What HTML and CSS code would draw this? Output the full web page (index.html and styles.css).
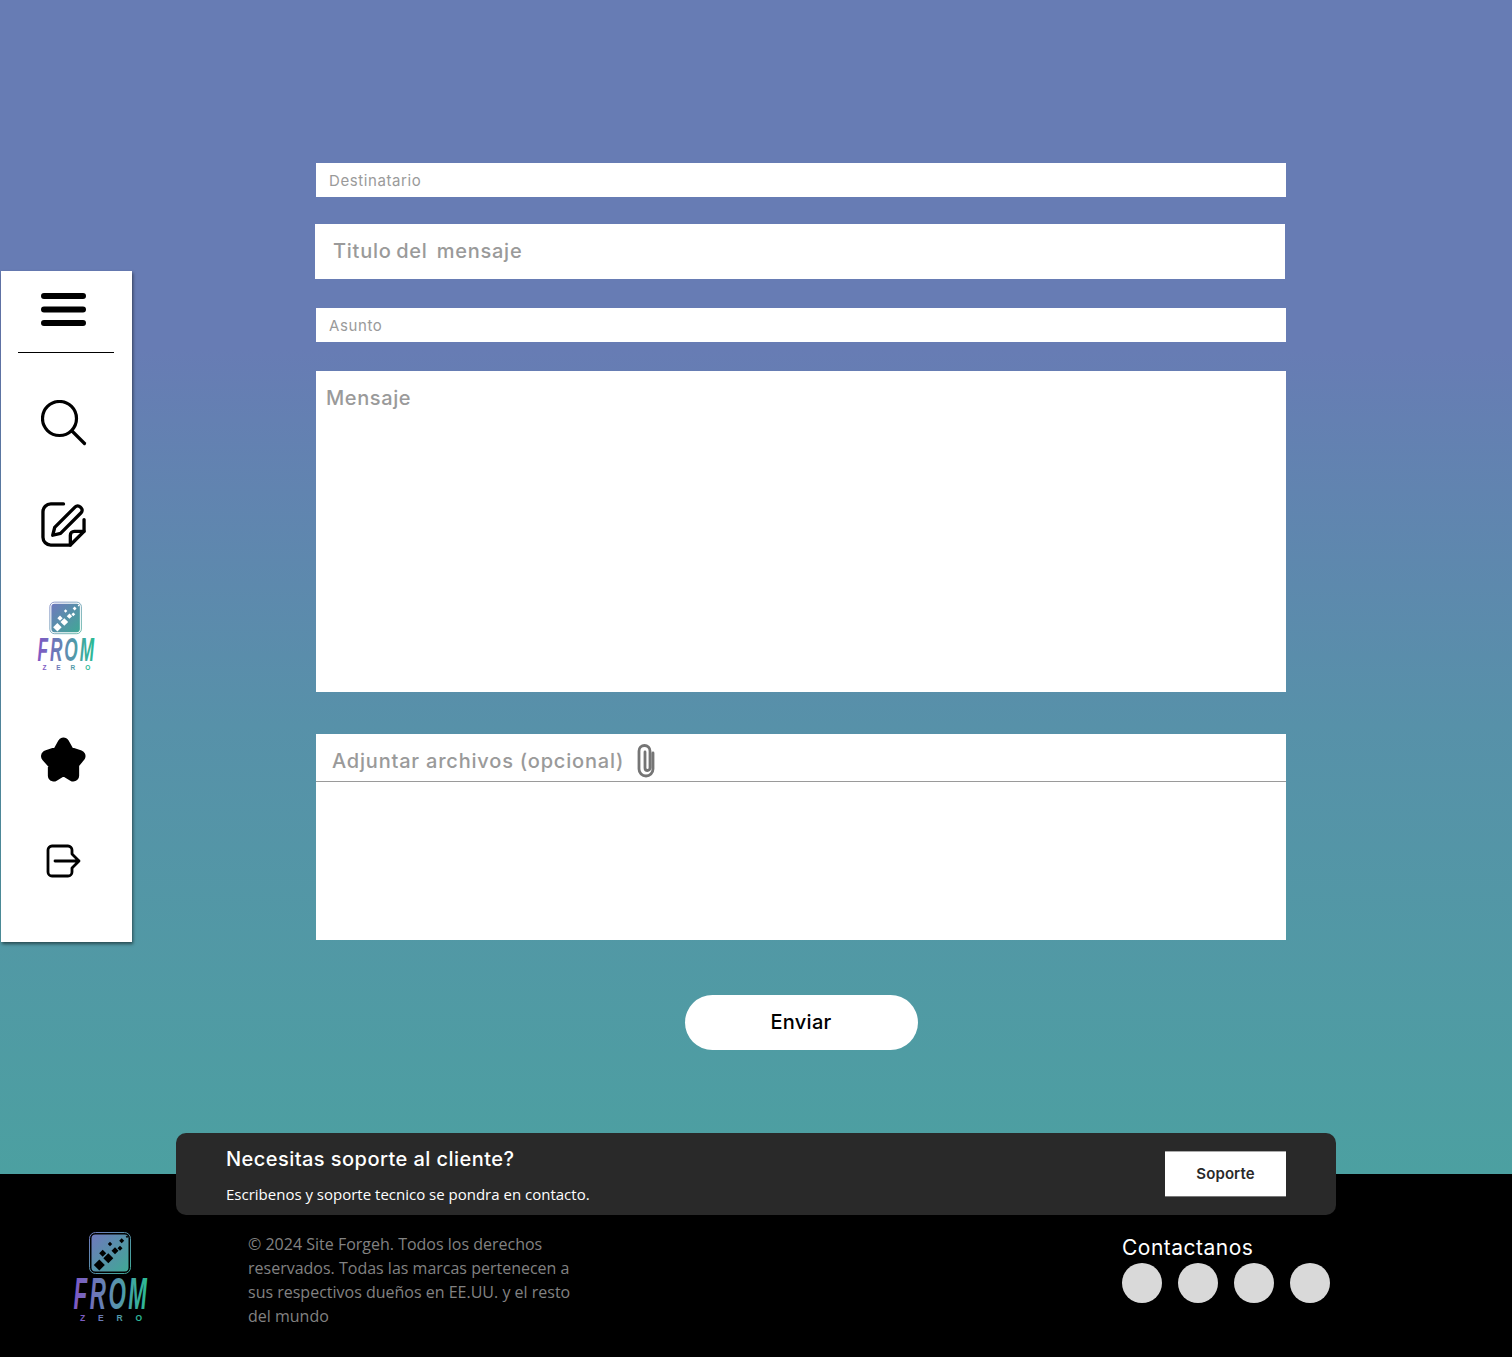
FILE: index.html
```html
<!DOCTYPE html>
<html lang="es">

<head>
  <title>From Zero - Nuevo mensaje</title>
  <link rel="stylesheet" href="styles.css">
</head>

<body>
  <svg class="defs" width="0" height="0">
    <defs>
      <linearGradient id="logo-square" x1="0" y1="0" x2="1" y2="1">
        <stop offset="0" stop-color="#6f79bd" />
        <stop offset="1" stop-color="#3fa895" />
      </linearGradient>
      <linearGradient id="logo-word" x1="0" y1="0" x2="1" y2="0">
        <stop offset="0" stop-color="#7f57c4" />
        <stop offset="0.5" stop-color="#5f8db0" />
        <stop offset="1" stop-color="#27bd92" />
      </linearGradient>
      <symbol id="logo" viewBox="0 0 75 91">
        <rect x="16.5" y="1.5" width="41" height="41" rx="6" fill="none" stroke="url(#logo-square)" />
        <rect x="18.5" y="3.5" width="37" height="37" rx="4" fill="url(#logo-square)" />
        <g fill="currentColor">
          <path d="M26.3 28.500 31.800 34 26.3 39.500 20.800 34Z" />
          <path d="M35.3 22.300 40.300 27.300 35.300 32.300 30.300 27.300Z" />
          <path d="M29.700 18.800 33.200 22.300 29.700 25.800 26.200 22.300Z" />
          <path d="M42 16.200 45.500 19.700 42 23.200 38.500 19.700Z" />
          <path d="M37 10.800 39.200 13 37 15.200 34.800 13Z" />
          <path d="M47 14.800 49.500 17.300 47 19.800 44.500 17.300Z" />
          <path d="M48.700 7.200 51.200 9.700 48.700 12.200 46.200 9.700Z" />
          <path d="M54 4.500 55.300 5.800 54 7.100 52.700 5.800Z" />
        </g>
        <text class="logo-word" x="0.5" y="78" textLength="76" lengthAdjust="spacingAndGlyphs" fill="url(#logo-word)">FROM</text>
        <text class="logo-zero" x="7" y="89.500" textLength="62" fill="url(#logo-word)">ZERO</text>
      </symbol>
    </defs>
  </svg>

  <div class="hero">
    <nav class="sidebar">
      <a class="menu-btn">
        <svg viewBox="0 0 46 34" width="46" height="34">
          <path d="M3 3H42M3 16.500H42M3 30H42" fill="none" stroke="#000" stroke-width="6" stroke-linecap="round" />
        </svg>
      </a>
      <hr class="sidebar-line">
      <a class="nav-icon search-icon">
        <svg viewBox="0 0 46 46" width="46" height="46">
          <circle cx="18.500" cy="18.500" r="17" fill="none" stroke="#000" stroke-width="3.200" />
          <path d="M31 31 43.500 43.500" fill="none" stroke="#000" stroke-width="3.200" stroke-linecap="round" />
        </svg>
      </a>
      <a class="nav-icon edit-icon">
        <svg viewBox="0 0 46 46" width="45" height="45">
          <g fill="none" stroke="#000" stroke-width="3.400" stroke-linejoin="round" stroke-linecap="round">
            <path d="M23 2H10a8 8 0 0 0-8 8V36a8 8 0 0 0 8 8H30L44 30V18" />
            <path d="M30 44V34a4 4 0 0 1 4-4H44" />
            <path d="M12 34 14 26 35 5a3.500 3.500 0 0 1 5 0l1 1a3.500 3.500 0 0 1 0 5L20 32Z" />
          </g>
        </svg>
      </a>
      <a class="nav-logo">
        <svg class="logo-sm" width="58" height="70"><use href="#logo" /></svg>
      </a>
      <a class="nav-icon star-icon">
        <svg viewBox="0 0 46 46" width="45" height="46">
          <polygon points="23,6 28,15 39.500,19 33,27 33,39 23,33 13,39 13,27 6,19 18,15" fill="#000" stroke="#000" stroke-width="12" stroke-linejoin="round" />
        </svg>
      </a>
      <a class="nav-icon exit-icon">
        <svg viewBox="0 0 36 35" width="36" height="35">
          <g fill="none" stroke="#000" stroke-width="2.800" stroke-linecap="round" stroke-linejoin="round">
            <path d="M26 9V6a4 4 0 0 0-4-4H6a4 4 0 0 0-4 4V28a4 4 0 0 0 4 4H22a4 4 0 0 0 4-4V25" />
            <path d="M9 17H33M26 10 33 17 26 24" />
          </g>
        </svg>
      </a>
    </nav>

    <main class="compose">
      <div class="field field-small">Destinatario</div>
      <div class="field field-title">Titulo del  mensaje</div>
      <div class="field field-small field-subject">Asunto</div>
      <div class="field field-message">Mensaje</div>
      <div class="attach">
        <div class="attach-head">
          <span>Adjuntar archivos (opcional)</span>
          <svg viewBox="0 0 18 35" width="18" height="35">
            <path d="M16 10V26a7 7 0 0 1-14 0V8a5.500 5.500 0 0 1 11 0V25a2.500 2.500 0 0 1-5 0V9" fill="none" stroke="#757575" stroke-width="2.800" stroke-linecap="round" />
          </svg>
        </div>
      </div>
      <button class="send-btn">Enviar</button>
    </main>
  </div>

  <footer class="footer">
    <div class="support">
      <div>
        <h2 class="support-title">Necesitas soporte al cliente?</h2>
        <p class="support-text">Escribenos y soporte tecnico se pondra en contacto.</p>
      </div>
      <button class="support-btn">Soporte</button>
    </div>
    <div class="footer-row">
      <svg class="logo-lg" width="75" height="91"><use href="#logo" /></svg>
      <p class="copyright">© 2024 Site Forgeh. Todos los derechos reservados. Todas las marcas pertenecen a sus respectivos dueños en EE.UU. y el resto del mundo</p>
      <div class="contact">
        <h3 class="contact-title">Contactanos</h3>
        <div class="contact-dots">
          <span class="dot"></span>
          <span class="dot"></span>
          <span class="dot"></span>
          <span class="dot"></span>
        </div>
      </div>
    </div>
  </footer>
</body>

</html>
```

FILE: styles.css
```css
body {
  margin: 0;
  font-family: "Inter", "Liberation Sans", sans-serif;
  background: #000;
}

.defs {
  display: block;
  height: 0;
}

.hero {
  display: flex;
  height: 1174px;
  background: linear-gradient(to bottom, #677cb4 350px, #5791a9 725px, #4ca0a1 1174px);
}

/* sidebar */
.sidebar {
  box-sizing: border-box;
  display: flex;
  flex-direction: column;
  width: 131px;
  height: 671px;
  margin: 271px 0 0 1px;
  background: white;
  box-shadow: 1px 2px 3px rgba(0, 0, 0, 0.5);
}

.menu-btn {
  display: block;
  height: 34px;
  margin: 22px 0 0 40px;
}

.sidebar-line {
  width: 96px;
  height: 1px;
  margin: 25px 0 0 17px;
  border: none;
  background: #000;
}

.nav-icon {
  display: block;
  margin-left: 40px;
  line-height: 0;
}

.search-icon {
  margin-top: 47px;
}

.edit-icon {
  margin-top: 56px;
}

.nav-logo {
  display: block;
  margin: 54px 0 0 36px;
  line-height: 0;
}

.star-icon {
  margin-top: 66px;
}

.exit-icon {
  margin: 61px 0 0 45px;
}

.logo-sm {
  color: white;
}

.logo-lg {
  color: black;
  flex: none;
}

.logo-word {
  font: italic bold 44px "Liberation Sans", sans-serif;
  letter-spacing: 5px;
}

.logo-zero {
  font: bold 8.500px "Liberation Sans", sans-serif;
}

/* form */
.compose {
  display: flex;
  flex-direction: column;
  width: 970px;
  margin-left: 184px;
  padding-top: 163px;
}

.field {
  box-sizing: border-box;
  background: white;
  color: #9a9a9a;
  white-space: pre;
}

.field-small {
  height: 34px;
  padding-left: 13px;
  font-size: 15px;
  line-height: 35px;
  letter-spacing: 0.6px;
}

.field-title {
  height: 55px;
  margin: 27px 1px 0 -1px;
  padding-left: 18px;
  font-size: 20px;
  font-weight: 500;
  line-height: 55px;
  letter-spacing: 0.75px;
  word-spacing: -1.500px;
}

.field-subject {
  margin-top: 29px;
}

.field-message {
  height: 321px;
  margin-top: 29px;
  padding: 13px 0 0 10px;
  font-size: 20px;
  font-weight: 500;
  line-height: 28px;
  letter-spacing: 0.6px;
}

.attach {
  height: 206px;
  margin-top: 42px;
  background: white;
}

.attach-head {
  box-sizing: border-box;
  display: flex;
  align-items: center;
  gap: 13px;
  height: 48px;
  padding: 6px 0 0 16px;
  border-bottom: 1px solid #9a9a9a;
  color: #9a9a9a;
  font-size: 20px;
  font-weight: 500;
  letter-spacing: 0.8px;
}

.send-btn {
  align-self: center;
  width: 233px;
  height: 55px;
  margin-top: 55px;
  padding-bottom: 2px;
  border: none;
  border-radius: 28px;
  background: white;
  color: #000;
  font-family: inherit;
  font-size: 20px;
  font-weight: 500;
  letter-spacing: 0.3px;
}

/* footer */
.footer {
  display: flow-root;
  height: 183px;
  background: #000;
}

.support {
  box-sizing: border-box;
  display: flex;
  justify-content: space-between;
  align-items: center;
  height: 82px;
  margin: -41px 176px 0;
  padding: 0 50px;
  border-radius: 10px;
  background: #292929;
}

.support-title {
  margin: 0;
  color: white;
  font-size: 20px;
  font-weight: 500;
  line-height: 28px;
  letter-spacing: 0.45px;
}

.support-text {
  margin: 12px 0 0;
  color: white;
  font-family: "Open Sans", sans-serif;
  font-size: 15px;
  line-height: 19px;
}

.support-btn {
  width: 121px;
  height: 46px;
  padding-bottom: 3px;
  border: none;
  border-top: 1px solid #aaa;
  border-bottom: 1px solid #777;
  background: white;
  color: #292929;
  font-family: "Inter", sans-serif;
  font-size: 15px;
  font-weight: 600;
  letter-spacing: 0.1px;
}

.footer-row {
  display: flex;
  padding: 16px 0 0 73px;
}

.copyright {
  width: 330px;
  margin: 1px 0 0 100px;
  color: #828282;
  font-family: "Open Sans", sans-serif;
  font-size: 16px;
  line-height: 24px;
}

.contact {
  margin-left: 544px;
}

.contact-title {
  margin: 5px 0 0;
  color: white;
  font-size: 21px;
  font-weight: 400;
  line-height: 24px;
  letter-spacing: 0.5px;
}

.contact-dots {
  display: flex;
  gap: 16px;
  margin-top: 3px;
}

.dot {
  width: 40px;
  height: 40px;
  border-radius: 50%;
  background: #d9d9d9;
}
```
